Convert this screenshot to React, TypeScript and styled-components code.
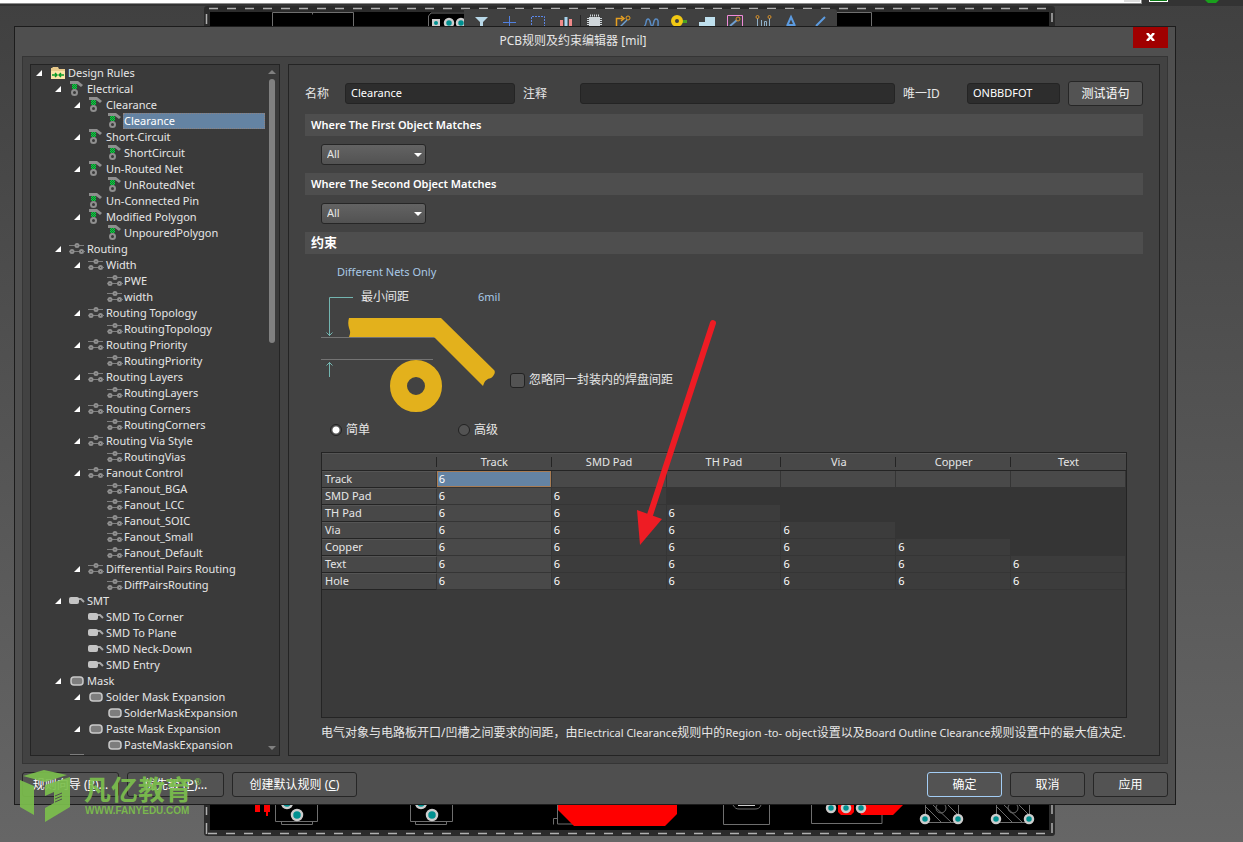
import React, { useState } from 'react';
import styled, { createGlobalStyle } from 'styled-components';

const uiFont = `'Noto Sans', 'Noto Sans CJK SC', sans-serif`;

const GlobalStyle = createGlobalStyle`
  *, *::before, *::after { box-sizing: border-box; }
  body { margin: 0; background: #656565; }
  button, input, select, table { font: inherit; color: inherit; }
`;

const Desktop = styled.div`
  position: relative;
  min-height: 100vh;
  padding: 26px 67px 37px 14px;
  overflow: hidden;
  background: linear-gradient(#404040, #666666);
  color: #e6e6e6;
  font-family: ${uiFont};
  font-size: 11px;
  line-height: 16px;
`;

const Backdrop = styled.svg`
  position: absolute;
  top: 0;
  left: 0;
  width: 100%;
  height: auto;
`;

const Overlay = styled(Backdrop)`
  pointer-events: none;
`;

const Dialog = styled.section`
  position: relative;
  display: flex;
  flex-direction: column;
  padding: 0 7px 7px;
  border: 1px solid #1c1c1c;
  background: #4f4f4f;
`;

const TitleBar = styled.header`
  display: flex;
  align-items: flex-start;
  height: 29px;
`;

const Title = styled.h1`
  flex: 1;
  margin: 0;
  padding-top: 4px;
  padding-right: 9px;
  font-size: 12px;
  font-weight: 400;
  line-height: 20px;
  text-align: center;
`;

const CloseButton = styled.button`
  display: grid;
  place-items: center;
  width: 35px;
  height: 21px;
  padding: 0 0 2px;
  border: 0;
  background: #a00000;
`;

const Frame = styled.div`
  display: flex;
  gap: 8px;
  padding: 7px;
  border: 1px solid #353535;
  background: #424242;
`;

const TreePane = styled.nav`
  display: flex;
  flex: none;
  width: 250px;
  height: 692px;
  border: 1px solid #242424;
  background: #3a3a3a;
  overflow: hidden;
`;

const TreeList = styled.ul`
  flex: 1;
  margin: 0;
  padding: 0;
  list-style: none;
`;

const TreeRow = styled.li<{ $depth: number }>`
  display: flex;
  align-items: center;
  height: 16px;
  padding-left: ${p => 5 + p.$depth * 19}px;
  white-space: nowrap;
`;

const Expander = styled.button<{ $hidden: boolean }>`
  display: grid;
  flex: none;
  width: 13px;
  height: 16px;
  padding: 5px 0 0;
  border: 0;
  background: none;
  visibility: ${p => (p.$hidden ? 'hidden' : 'visible')};
`;

const RowIcon = styled.svg`
  flex: none;
  width: 18px;
  height: 16px;
`;

const RowLabel = styled.span<{ $selected: boolean; $leaf: boolean }>`
  flex: 1;
  height: 16px;
  margin-left: ${p => (p.$leaf ? -1 : 0)}px;
  padding-left: 1px;
  line-height: 16px;
  background: ${p => (p.$selected ? '#6483a3' : 'none')};
  outline: ${p => (p.$selected ? '1px dotted #8f8380' : 'none')};
  outline-offset: -1px;
  color: ${p => (p.$selected ? '#ffffff' : 'inherit')};
`;

const Scrollbar = styled.div`
  display: flex;
  flex-direction: column;
  align-items: center;
  width: 14px;
  padding: 5px 0 4px;
`;

const ScrollThumb = styled.div`
  width: 6px;
  height: 264px;
  margin: 4px 0 auto;
  border-radius: 3px;
  background: #808080;
`;

const Panel = styled.main`
  flex: 1;
  min-width: 0;
  padding: 16px 16px 12px;
  border: 1px solid #242424;
`;

const FieldRow = styled.div`
  display: flex;
  align-items: center;
  gap: 8px;
  height: 25px;
`;

const FieldLabel = styled.label<{ $width: number }>`
  flex: none;
  width: ${p => p.$width}px;
  font-size: 12px;
`;

const TextBox = styled.input<{ $grow: number; $basis: number }>`
  flex: ${p => p.$grow} 1 ${p => p.$basis}px;
  min-width: 0;
  width: ${p => p.$basis}px;
  height: 21px;
  padding: 0 5px 2px;
  border: 1px solid #242424;
  border-radius: 3px;
  background: #2d2d2d;
  color: #ffffff;
`;

const PushButton = styled.button<{ $width: number; $primary?: boolean }>`
  flex: none;
  width: ${p => p.$width}px;
  height: 25px;
  padding: 0;
  border: 1px solid ${p => (p.$primary ? '#a3cdf5' : '#262626')};
  border-radius: 3px;
  background: #535353;
  color: #ffffff;
  font-size: 12px;
  line-height: 20px;
  white-space: nowrap;
`;

const SectionTitle = styled.h2`
  height: 22px;
  margin: 8px 0 0;
  padding-left: 6px;
  background: #4e4e4e;
  color: #ffffff;
  font-size: 11px;
  font-weight: 600;
  line-height: 22px;
`;

const SectionTitleLarge = styled(SectionTitle)`
  font-size: 13px;
  font-weight: 700;
  line-height: 20px;
`;

const SelectBox = styled.div`
  display: grid;
  align-items: center;
  width: 105px;
  margin: 8px 0 0 16px;

  & > * { grid-area: 1 / 1; }
  svg { justify-self: end; margin-right: 4px; pointer-events: none; }
`;

const Select = styled.select`
  width: 100%;
  height: 21px;
  padding: 0 5px 2px;
  appearance: none;
  border: 1px solid #262626;
  border-radius: 3px;
  background: linear-gradient(#636363, #525252);
`;

const Constraints = styled.div`
  padding: 10px 16px 0;
`;

const NetScope = styled.p`
  margin: 0;
  padding-left: 16px;
  color: #a9c9e6;
`;

const DiagramRow = styled.div`
  display: flex;
  align-items: flex-end;
  height: 134px;
`;

const Diagram = styled.svg`
  flex: none;
  width: 189px;
  height: 134px;
`;

const Choice = styled.label`
  display: flex;
  align-items: center;
  font-size: 12px;
  line-height: 16px;
`;

const IgnoreChoice = styled(Choice)`
  gap: 4px;
  padding-bottom: 26px;
`;

const CheckBox = styled.input`
  width: 15px;
  height: 15px;
  margin: 0;
  appearance: none;
  border: 1px solid #222222;
  border-radius: 3px;
  background: #535353;
  &:checked { background: #a9c9e6; }
`;

const Radio = styled.input`
  width: 12px;
  height: 12px;
  margin: 0;
  appearance: none;
  border: 1px solid #222222;
  border-radius: 50%;
  background: #535353;
  &:checked { background: radial-gradient(#ffffff 0 3px, #535353 4px); }
`;

const ModeRow = styled.div`
  display: grid;
  grid-template-columns: 128px max-content;
  padding: 8px 0 14px 9px;

  ${Choice} { gap: 4px; }
`;

const MatrixBox = styled.div`
  min-height: 266px;
  border: 1px solid #242424;
  background: #3a3a3a;
`;

const Matrix = styled.table`
  width: 100%;
  table-layout: fixed;
  border-collapse: separate;
  border-spacing: 0;
  line-height: 13px;
`;

const ColumnHead = styled.th<{ $last: boolean }>`
  height: 18px;
  padding: 0 0 2px;
  border-top: 1px solid #555555;
  border-bottom: 1px solid #242424;
  background: linear-gradient(#242424, #242424) right center / ${p => (p.$last ? 0 : 1)}px 10px no-repeat #484848;
  font-weight: 400;
`;

const RowHead = styled.th`
  height: 17px;
  padding: 0 0 2px 3px;
  border-top: 1px solid #555555;
  border-right: 1px solid #363636;
  border-bottom: 1px solid #242424;
  background: #484848;
  font-weight: 400;
  text-align: left;
`;

type CellTone = 'selected' | 'lit' | 'plain' | 'empty';

const cellFill: Record<CellTone, string> = {
  selected: '#6483a3',
  lit: '#494949',
  plain: '#3c3c3c',
  empty: '#353535',
};

const Cell = styled.td<{ $tone: CellTone }>`
  height: 17px;
  padding: 0 0 2px 2px;
  border-right: 1px solid #353535;
  border-bottom: 1px solid #353535;
  background: ${p => cellFill[p.$tone]};
  color: #ffffff;
  box-shadow: ${p => (p.$tone === 'selected' ? 'inset 0 0 0 1px #a87c54' : 'none')};
`;

const Note = styled.p`
  margin: 5px 0 0;
  font-size: 12px;
  line-height: 20px;
  white-space: nowrap;

  span { font-size: 11px; }
`;

const Footer = styled.footer`
  display: flex;
  gap: 8px;
  padding-top: 8px;
`;

const Spacer = styled.div`
  flex: 1;
`;

type IconKind = 'folder' | 'clearance' | 'routing' | 'smt' | 'mask' | 'plane';

const iconArt: Record<IconKind, React.ReactNode> = {
  folder: (
    <>
      <path d="M2 14V3h1l1-1h5l1 2h6v10z" fill="#e8c98a" />
      <path d="M2 6h14v8H2z" fill="#fbe3a6" />
      <path d="M3 10h5M6 8l2 2-2 2M15 10h-5M12 8l-2 2 2 2" stroke="#0a9a28" strokeWidth="1.4" fill="none" />
    </>
  ),
  clearance: (
    <>
      <path d="M2 0h8l5 4-2 2-4-3H2z" fill="#8f8f8f" />
      <path d="M4 3h5v5H4z" fill="#0d7a2c" />
      <path d="M5 3h1v1H5zM7 3h1v1H7zM4 4h1v1H4zM6 4h1v1H6zM8 4h1v1H8zM5 5h1v1H5zM7 5h1v1H7zM4 6h1v1H4zM6 6h1v1H6zM8 6h1v1H8zM5 7h1v1H5zM7 7h1v1H7z" fill="#12cc44" />
      <circle cx="6.500" cy="11.500" r="2.500" fill="none" stroke="#8f8f8f" strokeWidth="2" />
    </>
  ),
  routing: (
    <>
      <path d="M1 4.500h15M6 10.500h6" stroke="#7f7f7f" />
      <g fill="#3a3a3a" stroke="#8f8f8f" strokeWidth="2">
        <circle cx="9" cy="4.500" r="1.500" />
        <circle cx="4" cy="10.500" r="1.500" />
        <circle cx="13.500" cy="10.500" r="1.500" />
      </g>
      <path d="M1 10.500h1M15 10.500h2" stroke="#7f7f7f" />
    </>
  ),
  smt: (
    <>
      <path d="M10 6h3l3 3" stroke="#a8a8a8" strokeWidth="2" fill="none" />
      <rect x="1" y="4" width="10" height="7" rx="2" fill="#c4c4c4" />
    </>
  ),
  mask: <rect x="3" y="4" width="12" height="8" rx="3" fill="#7d7d7d" stroke="#c9c9c9" strokeWidth="1.500" />,
  plane: <rect x="2" y="1" width="14" height="12" fill="#7d7d7d" />,
};

interface RuleNode {
  depth: number;
  icon: IconKind;
  label: string;
  open?: boolean;
}

const node = (depth: number, icon: IconKind, label: string, open = false): RuleNode => ({ depth, icon, label, open });

const rules: RuleNode[] = [
  node(0, 'folder', 'Design Rules', true),
  node(1, 'clearance', 'Electrical', true),
  node(2, 'clearance', 'Clearance', true),
  node(3, 'clearance', 'Clearance'),
  node(2, 'clearance', 'Short-Circuit', true),
  node(3, 'clearance', 'ShortCircuit'),
  node(2, 'clearance', 'Un-Routed Net', true),
  node(3, 'clearance', 'UnRoutedNet'),
  node(2, 'clearance', 'Un-Connected Pin'),
  node(2, 'clearance', 'Modified Polygon', true),
  node(3, 'clearance', 'UnpouredPolygon'),
  node(1, 'routing', 'Routing', true),
  node(2, 'routing', 'Width', true),
  node(3, 'routing', 'PWE'),
  node(3, 'routing', 'width'),
  node(2, 'routing', 'Routing Topology', true),
  node(3, 'routing', 'RoutingTopology'),
  node(2, 'routing', 'Routing Priority', true),
  node(3, 'routing', 'RoutingPriority'),
  node(2, 'routing', 'Routing Layers', true),
  node(3, 'routing', 'RoutingLayers'),
  node(2, 'routing', 'Routing Corners', true),
  node(3, 'routing', 'RoutingCorners'),
  node(2, 'routing', 'Routing Via Style', true),
  node(3, 'routing', 'RoutingVias'),
  node(2, 'routing', 'Fanout Control', true),
  node(3, 'routing', 'Fanout_BGA'),
  node(3, 'routing', 'Fanout_LCC'),
  node(3, 'routing', 'Fanout_SOIC'),
  node(3, 'routing', 'Fanout_Small'),
  node(3, 'routing', 'Fanout_Default'),
  node(2, 'routing', 'Differential Pairs Routing', true),
  node(3, 'routing', 'DiffPairsRouting'),
  node(1, 'smt', 'SMT', true),
  node(2, 'smt', 'SMD To Corner'),
  node(2, 'smt', 'SMD To Plane'),
  node(2, 'smt', 'SMD Neck-Down'),
  node(2, 'smt', 'SMD Entry'),
  node(1, 'mask', 'Mask', true),
  node(2, 'mask', 'Solder Mask Expansion', true),
  node(3, 'mask', 'SolderMaskExpansion'),
  node(2, 'mask', 'Paste Mask Expansion', true),
  node(3, 'mask', 'PasteMaskExpansion'),
  node(1, 'plane', ''),
];

const selectedIndex = 3;

function RuleTree() {
  return (
    <TreePane aria-label="Design Rules">
      <TreeList>
        {rules.map((r, i) => (
          <TreeRow key={i} $depth={r.depth}>
            <Expander $hidden={!r.open} aria-label={`Collapse ${r.label}`}>
              <svg width="6" height="6"><path d="M6 0v6H0z" fill="#ffffff" /></svg>
            </Expander>
            <RowIcon viewBox="0 0 18 16">{iconArt[r.icon]}</RowIcon>
            <RowLabel $selected={i === selectedIndex} $leaf={r.depth === 3}>{r.label}</RowLabel>
          </TreeRow>
        ))}
      </TreeList>
      <Scrollbar aria-hidden="true">
        <svg width="8" height="5"><path d="M4 0l4 4H0z" fill="#808080" /></svg>
        <ScrollThumb />
        <svg width="8" height="5"><path d="M0 0h8L4 4z" fill="#808080" /></svg>
      </Scrollbar>
    </TreePane>
  );
}

function MatchSelect({ label }: { label: string }) {
  return (
    <SelectBox>
      <Select aria-label={label}><option>All</option></Select>
      <svg width="8" height="4"><path d="M0 0h8L4 4z" fill="#ffffff" /></svg>
    </SelectBox>
  );
}

function ClearanceDiagram() {
  return (
    <Diagram viewBox="321 280 189 134" role="img" aria-label="最小间距 6mil">
      <text x="361" y="301" fontSize="12" fill="#e6e6e6">最小间距</text>
      <text x="478" y="301" fontSize="11" fill="#a9c9e6">6mil</text>
      <path d="M321 337.500h114M321 359.500h112" stroke="#747474" />
      <path d="M353 297.500h-23.500V336M326.500 332.500l3 3 3-3M329.500 377v-15M326.500 365.500l3-3 3 3" fill="none" stroke="#73b5b0" />
      <path d="M349 318h92l53 52c2 2 0 6-3 8-4 1-6 2-8 8l-49-49h-85c2-5 1-6 0-9-1-3-1-7 0-10z" fill="#e3b11c" />
      <circle cx="416" cy="386" r="17.500" fill="none" stroke="#e3b11c" strokeWidth="17" />
    </Diagram>
  );
}

const columns = ['Track', 'SMD Pad', 'TH Pad', 'Via', 'Copper', 'Text'];
const rowNames = [...columns, 'Hole'];

function cellTone(row: number, col: number): CellTone {
  if (row === 0) return col === 0 ? 'selected' : 'lit';
  if (col > row) return 'empty';
  return col === 0 ? 'lit' : 'plain';
}

function ClearanceMatrix() {
  return (
    <MatrixBox>
      <Matrix>
        <thead>
          <tr>
            <ColumnHead $last={false} />
            {columns.map((c, i) => (
              <ColumnHead key={c} $last={i === columns.length - 1} scope="col">{c}</ColumnHead>
            ))}
          </tr>
        </thead>
        <tbody>
          {rowNames.map((name, row) => (
            <tr key={name}>
              <RowHead scope="row">{name}</RowHead>
              {columns.map((c, col) => (
                <Cell key={c} $tone={cellTone(row, col)}>{col <= row ? '6' : ''}</Cell>
              ))}
            </tr>
          ))}
        </tbody>
      </Matrix>
    </MatrixBox>
  );
}

function Pad({ x, y, r = 6 }: { x: number; y: number; r?: number }) {
  return <circle cx={x} cy={y} r={r - 1} fill="#009090" stroke="#cccccc" strokeWidth="2.500" />;
}

function BoardView() {
  return (
    <Backdrop viewBox="0 0 1243 842" aria-hidden="true">
      <path d="M0 0h1243v6H0z" fill="#333333" />
      <path d="M0 0h1142v4H0z" fill="#8c8c8c" />
      <path d="M0 0h1141v3H0z" fill="#ffffff" />
      <path d="M1124 0h16v2h-16z" fill="#dddddd" />
      <path d="M1149 0h19v2h-19z" fill="#ffffff" />
      <path d="M1150 0h17v1h-17z" fill="#0a7a14" />
      <path d="M1205 0h14l-3 3h-8z" fill="#19a01c" />

      <rect x="204" y="6" width="851" height="830" rx="3" fill="#2b2b2b" />
      <path d="M210 12h839v818H210z" fill="#000000" />
      <path d="M209 8.500h838M208 833.500h838" stroke="#b0b0b0" strokeWidth="1.500" strokeDasharray="9 9" />
      <path d="M206.500 14v10M206.500 807v8M206.500 823v11M1052 13v9M1052 805v9M1052 823v10" stroke="#b0b0b0" strokeWidth="1.500" />
      <g fill="none" stroke="#6e6e6e">
        <path d="M272.500 26V12.500h81V26M312.500 12.500v2M837 12.500h34.500V26M464 13h-33l-2.500 3v10" />
        <path d="M275.500 805v16.500h42V805M281.500 822v2.500h31V822M410.500 805v16.500h42V805M415.500 822v2.500h31V822" />
        <path d="M557.500 805v19h24M553.500 824.500v-6h4M723.500 805v19.500h46V805M811.500 805v18.500h70.500V814" />
        <path d="M733 805c2 3 3 4 6 4h16c3 0 5-1 6-4" />
        <path d="M925.500 805v17.500h33V805M996.500 805v17.500h33V805M925 806l16 16M933 805l18 17M948 805l10 10M996 806l16 16M1004 805l18 17M1019 805l10 10" />
        <circle cx="941" cy="808" r="5" />
        <circle cx="1013" cy="808" r="5" />
      </g>
      <path d="M738 805h17v1h-17z" fill="#cccccc" />
      <path d="M432 19h8v8h-8z" fill="#cccccc" />
      <circle cx="436" cy="23" r="2" fill="#009090" />
      <Pad x={449} y={23} r={5} />
      <Pad x={461} y={23} r={5} />
      <path d="M255 805h5v7h-5zM264 805h6v7h-2v4h-2v-4h-2z" fill="#ff0000" />
      <path d="M558 805h119v9l-12 12h-91l-16-16zM838 805h16v7l-3 3h-10l-3-3zM857 805h46l-10 10h-32z" fill="#ff0000" />
      <Pad x={287} y={803} /><Pad x={297} y={815} />
      <Pad x={421} y={803} /><Pad x={432} y={815} />
      <Pad x={831} y={808} r={5} /><Pad x={846} y={808} r={5} /><Pad x={861} y={808} r={5} />
      <Pad x={925} y={819} r={5} /><Pad x={958} y={819} r={5} />
      <Pad x={996} y={819} r={5} /><Pad x={1029} y={819} r={5} />

      <path d="M464 9h370q3 0 3 3v15H464z" fill="#404040" />
      <path d="M475 17h13l-5 5v8h-3v-8z" fill="#b8d8e8" />
      <path d="M503 22.500h13M509.500 16v12" stroke="#5080e0" />
      <path d="M531.500 28V16.500h13V28" fill="none" stroke="#5b86e6" strokeDasharray="2 1" />
      <path d="M560 20h3v8h-3zM569 19h3v8h-3z" fill="#f08a8a" />
      <path d="M564.500 17h3v10h-3z" fill="#a8d4ee" />
      <path d="M580.500 15v12" stroke="#262626" />
      <path d="M589 17h11v10h-11z" fill="#cfd6da" />
      <path d="M590 15.500h10" stroke="#cfd6da" strokeWidth="2" strokeDasharray="1 1" />
      <path d="M588 18v8M601 18v8" stroke="#cfd6da" strokeWidth="2" strokeDasharray="1 1" />
      <path d="M616.500 26v-7.500h6M621 16l3 2.500-3 2.500" fill="none" stroke="#e8a020" strokeWidth="1.500" />
      <path d="M627 20l-7 7" stroke="#6f9fd0" strokeWidth="1.500" />
      <circle cx="628" cy="18" r="2" fill="none" stroke="#e8a020" />
      <path d="M644 26c3 0 1-7 4-7s2 7 4 7 1-7 4-7 2 4 2 7" fill="none" stroke="#5a8cc4" strokeWidth="1.500" />
      <path d="M680 21.500h7" stroke="#49a024" strokeWidth="3" />
      <circle cx="677" cy="21" r="4" fill="none" stroke="#f2c914" strokeWidth="4" />
      <path d="M699 27v-5h6v-5h10v10z" fill="#bfe0ee" />
      <path d="M727.500 27V15.500h15V27" fill="none" stroke="#f08ad8" />
      <path d="M730 26l7-6" stroke="#6f9fd0" strokeWidth="2" />
      <circle cx="738" cy="19" r="2" fill="none" stroke="#d89028" />
      <path d="M757.500 18v9M769.500 18v9M761.500 20v7M764.500 27v-5.500h2V27" fill="none" stroke="#8fb0c8" />
      <circle cx="757.500" cy="17" r="1.500" fill="none" stroke="#d89028" />
      <circle cx="769.500" cy="17" r="1.500" fill="none" stroke="#d89028" />
      <path d="M787 26l4-9 4 9M788 25h6" fill="none" stroke="#5c9be0" strokeWidth="2" />
      <path d="M816 26l9-9" stroke="#5c9be0" strokeWidth="2" />
    </Backdrop>
  );
}

function Annotations() {
  return (
    <Overlay viewBox="0 0 1243 842">
      <path d="M713 323L650 515" stroke="#ee1c24" strokeWidth="6" strokeLinecap="round" />
      <path d="M637 510l25 9-22 26z" fill="#ee1c24" />
      <g fill="#7cbf4d" opacity="0.92">
        <path d="M23 776l21-6 23 5-22 7z" />
        <path d="M20 780l14 6v29l-14-8z" />
        <path d="M45 785l25-8v30l-25 15v-14l9-5v-11l-9 4z" />
        <path d="M55 796l7-3M55 799l7-3M55 802l7-3" stroke="#4f4f4f" fill="none" />
        <text x="84" y="800" fontSize="27" fontWeight="700">凡亿教育</text>
        <text x="194" y="785" fontSize="9">®</text>
        <text x="85" y="814" fontSize="10" fontWeight="700" fontFamily="'Liberation Sans', sans-serif">WWW.FANYEDU.COM</text>
      </g>
    </Overlay>
  );
}

export default function App() {
  const [mode, setMode] = useState('simple');
  return (
    <Desktop>
      <GlobalStyle />
      <BoardView />
      <Dialog role="dialog" aria-labelledby="dialog-title">
        <TitleBar>
          <Title id="dialog-title">PCB规则及约束编辑器 [mil]</Title>
          <CloseButton aria-label="关闭">
            <svg width="9" height="8"><path d="M1 0l7 8M8 0L1 8" stroke="#ffffff" strokeWidth="2.500" /></svg>
          </CloseButton>
        </TitleBar>
        <Frame>
          <RuleTree />
          <Panel>
            <FieldRow>
              <FieldLabel htmlFor="rule-name" $width={32}>名称</FieldLabel>
              <TextBox id="rule-name" defaultValue="Clearance" $grow={1} $basis={170} />
              <FieldLabel htmlFor="rule-comment" $width={49}>注释</FieldLabel>
              <TextBox id="rule-comment" $grow={2} $basis={315} />
              <FieldLabel htmlFor="rule-id" $width={56}>唯一ID</FieldLabel>
              <TextBox id="rule-id" defaultValue="ONBBDFOT" $grow={0} $basis={93} />
              <PushButton $width={75}>测试语句</PushButton>
            </FieldRow>
            <SectionTitle>Where The First Object Matches</SectionTitle>
            <MatchSelect label="Where The First Object Matches" />
            <SectionTitle>Where The Second Object Matches</SectionTitle>
            <MatchSelect label="Where The Second Object Matches" />
            <SectionTitleLarge>约束</SectionTitleLarge>
            <Constraints>
              <NetScope>Different Nets Only</NetScope>
              <DiagramRow>
                <ClearanceDiagram />
                <IgnoreChoice>
                  <CheckBox type="checkbox" />
                  忽略同一封装内的焊盘间距
                </IgnoreChoice>
              </DiagramRow>
              <ModeRow>
                <Choice>
                  <Radio type="radio" name="mode" checked={mode === 'simple'} onChange={() => setMode('simple')} />
                  简单
                </Choice>
                <Choice>
                  <Radio type="radio" name="mode" checked={mode === 'advanced'} onChange={() => setMode('advanced')} />
                  高级
                </Choice>
              </ModeRow>
              <ClearanceMatrix />
              <Note>
                电气对象与电路板开口/凹槽之间要求的间距，由<span>Electrical Clearance</span>规则中的<span>Region -to- object</span>设置以及<span>Board Outline Clearance</span>规则设置中的最大值决定.
              </Note>
            </Constraints>
          </Panel>
        </Frame>
        <Footer>
          <PushButton $width={97}>规则向导 (<u>R</u>)...</PushButton>
          <PushButton $width={97}>优先级 (<u>P</u>)...</PushButton>
          <PushButton $width={125}>创建默认规则 (<u>C</u>)</PushButton>
          <Spacer />
          <PushButton $width={75} $primary>确定</PushButton>
          <PushButton $width={75}>取消</PushButton>
          <PushButton $width={75}>应用</PushButton>
        </Footer>
      </Dialog>
      <Annotations />
    </Desktop>
  );
}
